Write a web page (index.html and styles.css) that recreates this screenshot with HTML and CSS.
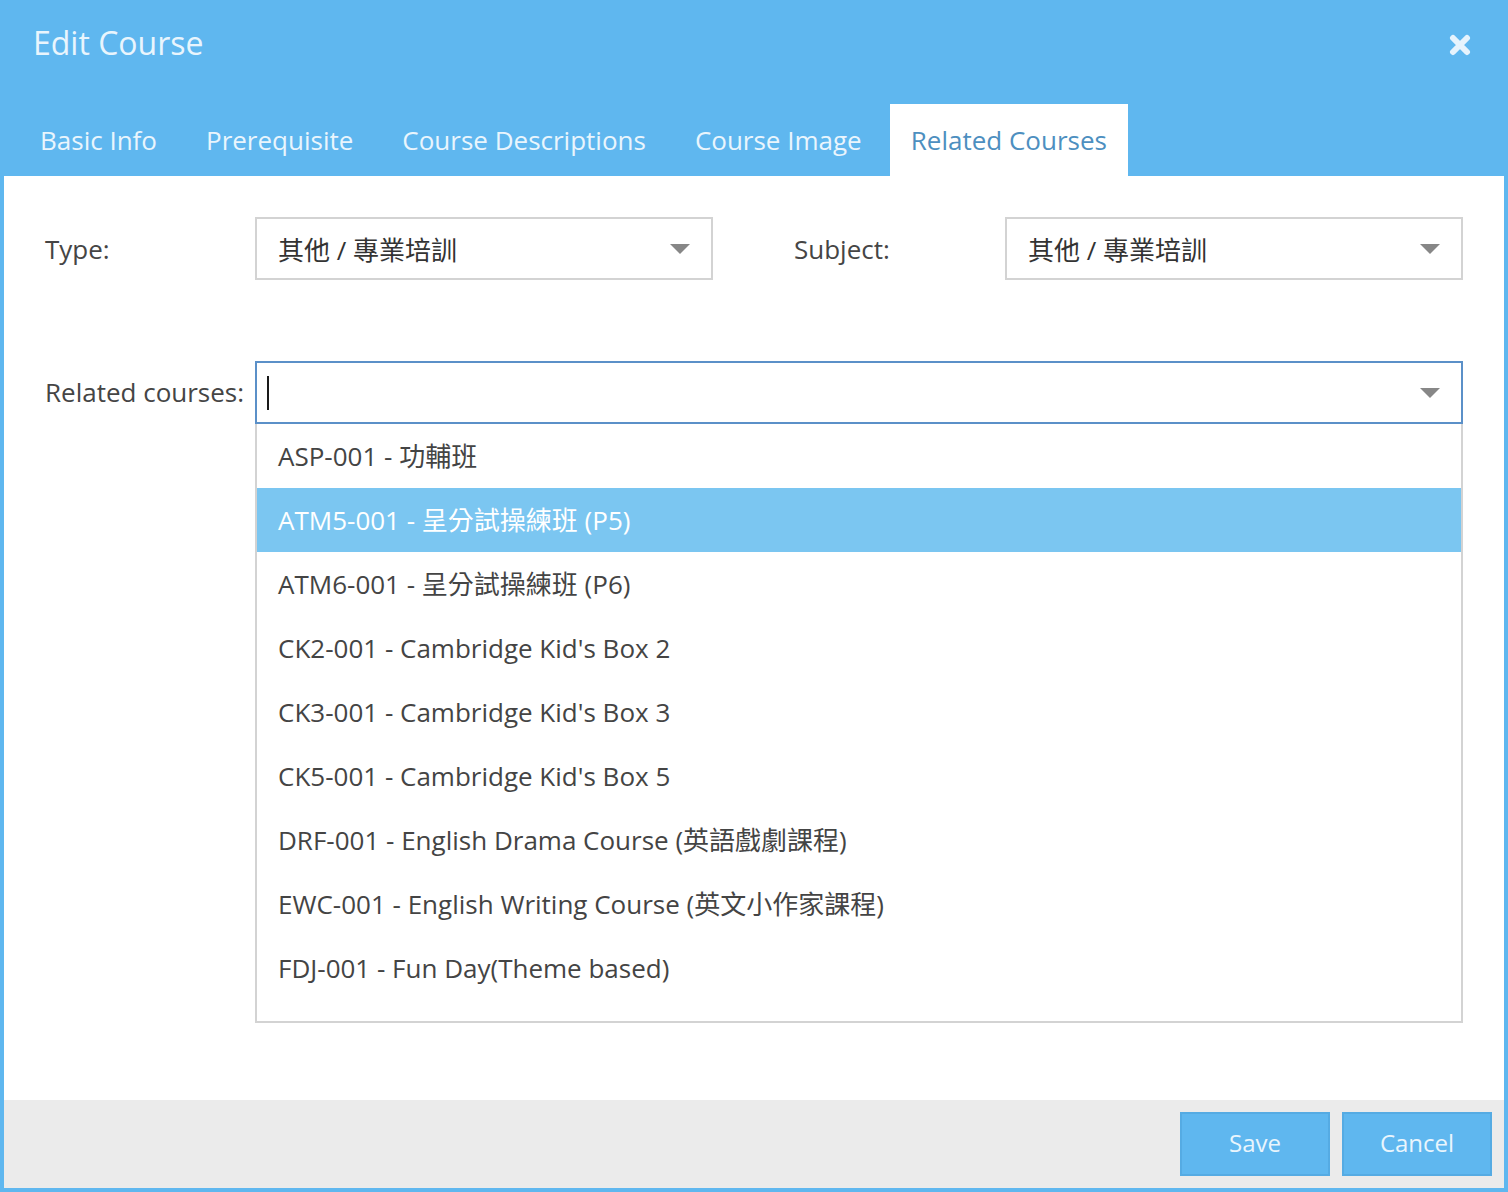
FILE: index.html
```html
<!DOCTYPE html>
<html lang="zh-Hant">
<head>
<meta charset="utf-8">
<title>Edit Course</title>
<link rel="stylesheet" href="styles.css">
</head>
<body>
<div class="dialog">
  <div class="header">
    <h1 class="title">Edit Course</h1>
    <span class="close" aria-label="Close">
      <svg width="22" height="22" viewBox="0 0 22 22"><path d="M4 4 L18 18 M18 4 L4 18" stroke="#e6f3fd" stroke-width="6" stroke-linecap="round" fill="none"/></svg>
    </span>
  </div>
  <div class="tabs">
    <div class="tab">Basic Info</div>
    <div class="tab">Prerequisite</div>
    <div class="tab">Course Descriptions</div>
    <div class="tab">Course Image</div>
    <div class="tab active">Related Courses</div>
  </div>
  <div class="content">
    <div class="row-top">
      <label class="label">Type:</label>
      <div class="select"><span class="value">其他 / 專業培訓</span><span class="arrow"></span></div>
      <label class="label label-subject">Subject:</label>
      <div class="select"><span class="value">其他 / 專業培訓</span><span class="arrow"></span></div>
    </div>
    <div class="row-related">
      <label class="label label-related">Related courses:</label>
      <div class="combo">
        <div class="combo-input"><span class="caret"></span><span class="arrow"></span></div>
        <ul class="options">
          <li class="option">ASP-001 - 功輔班</li>
          <li class="option selected">ATM5-001 - 呈分試操練班 (P5)</li>
          <li class="option">ATM6-001 - 呈分試操練班 (P6)</li>
          <li class="option">CK2-001 - Cambridge Kid's Box 2</li>
          <li class="option">CK3-001 - Cambridge Kid's Box 3</li>
          <li class="option">CK5-001 - Cambridge Kid's Box 5</li>
          <li class="option">DRF-001 - English Drama Course (英語戲劇課程)</li>
          <li class="option">EWC-001 - English Writing Course (英文小作家課程)</li>
          <li class="option">FDJ-001 - Fun Day(Theme based)</li>
        </ul>
      </div>
    </div>
  </div>
  <div class="footer">
    <button class="btn">Save</button>
    <button class="btn">Cancel</button>
  </div>
</div>
</body>
</html>
```

FILE: styles.css
```css
* { box-sizing: border-box; }
html, body { margin: 0; padding: 0; }
body {
  font-family: "Open Sans", "Noto Sans CJK TC", sans-serif;
  background: #5fb7ef;
}
.dialog {
  height: 100vh;
  display: flex;
  flex-direction: column;
  background: #5fb7ef;
  padding: 0 4px 4px 4px;
}
.header {
  height: 104px;
  display: flex;
  justify-content: space-between;
  align-items: flex-start;
  padding: 27px 33px 0 29px;
}
.title {
  margin: 0;
  font-weight: 400;
  font-size: 32px;
  line-height: 32px;
  color: #e9f5fd;
}
.close {
  display: block;
  margin-top: 7px;
  width: 22px;
  height: 22px;
}
.close svg { display: block; }
.tabs {
  height: 72px;
  display: flex;
  gap: 7px;
  padding-left: 15px;
}
.tab {
  padding: 0 21px;
  font-size: 26px;
  line-height: 72px;
  color: #e9f5fd;
  white-space: nowrap;
}
.tab.active {
  background: #ffffff;
  color: #4d8fc0;
}
.content {
  flex: 1;
  background: #ffffff;
  padding: 41px 41px 0 41px;
}
.row-top {
  display: grid;
  grid-template-columns: 210px 1fr 292px 1fr;
  align-items: center;
}
.label {
  font-size: 26px;
  color: #454545;
}
.label-subject { padding-left: 81px; }
.select, .combo-input {
  height: 63px;
  border: 2px solid #d3d3d3;
  display: flex;
  align-items: center;
  justify-content: space-between;
  padding: 1px 21px 0 21px;
  background: #fff;
}
.value {
  font-size: 26px;
  color: #333;
}
.arrow {
  width: 0;
  height: 0;
  border-left: 10px solid transparent;
  border-right: 10px solid transparent;
  border-top: 10px solid #878787;
}
.row-related {
  margin-top: 81px;
  display: grid;
  grid-template-columns: 210px 1fr;
  align-items: start;
}
.label-related {
  line-height: 63px;
  white-space: nowrap;
}
.combo-input {
  border-color: #5b90c8;
  padding-left: 10px;
}
.caret {
  width: 2px;
  height: 34px;
  background: #1a1a1a;
}
.options {
  list-style: none;
  margin: 0;
  padding: 0 0 21px 0;
  border: 2px solid #d3d3d3;
  border-top: none;
}
.option {
  height: 64px;
  line-height: 64px;
  padding-left: 21px;
  font-size: 26px;
  color: #444;
  white-space: nowrap;
}
.option.selected {
  background: #7bc6f1;
  color: #ffffff;
}
.footer {
  height: 88px;
  background: #ebebeb;
  display: flex;
  justify-content: flex-end;
  align-items: flex-start;
  gap: 12px;
  padding: 12px 12px 0 0;
}
.btn {
  width: 150px;
  height: 64px;
  background: #5fb7ef;
  border: 2px solid #55abe3;
  color: #e9f5fd;
  font-family: "Open Sans", sans-serif;
  font-size: 24px;
  padding: 0 0 3px 0;
}
```
